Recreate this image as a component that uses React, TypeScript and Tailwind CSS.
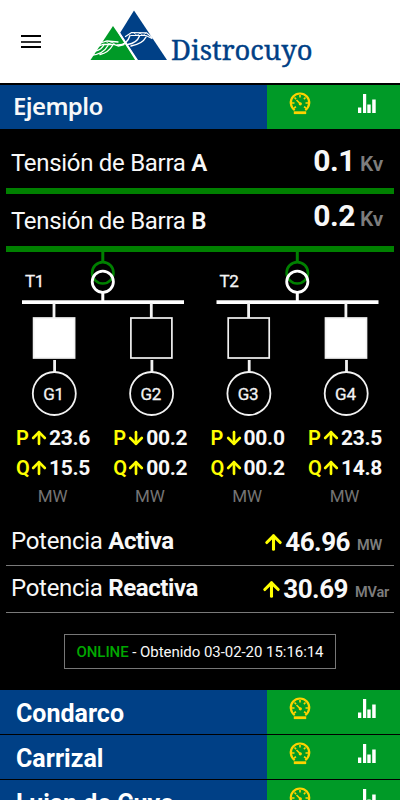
import { ArrowDown, ArrowUp } from 'lucide-react';

interface Generator {
  name: string;
  active: boolean;
  p: string;
  pDown?: boolean;
  q: string;
}

const generators: Generator[] = [
  { name: 'G1', active: true, p: '23.6', q: '15.5' },
  { name: 'G2', active: false, p: '00.2', pDown: true, q: '00.2' },
  { name: 'G3', active: false, p: '00.0', pDown: true, q: '00.2' },
  { name: 'G4', active: true, p: '23.5', q: '14.8' },
];

const otherStations = ['Condarco', 'Carrizal', 'Lujan de Cuyo'];

function Logo() {
  return (
    <svg width="228" height="64" viewBox="88 6 228 64">
      <path d="M113 26L90.500 60H136L119.500 35.500Z" fill="#009a27" />
      <path d="M134 10.500L120 33L138 60H167Z" fill="#004086" />
      <path d="M119 32.500L136.500 60.500" stroke="#fff" strokeWidth="1.700" />
      <g fill="none" stroke="#fff" strokeLinecap="round">
        <path d="M90 55.500C99 55 105 51 108 45.500M95.500 51C100 50 102.500 48 104 44.500M100 54.500C107 53 110 50 112.500 45.500" strokeWidth="1.300" />
        <path d="M102 42.500L107 41L118 42M99 46L103 44.500L114 44.500L118.500 46L124 44.500" strokeWidth="1.300" />
        <path d="M106 41.500L109 44L112 42L115 44.500" strokeWidth="0.800" />
        <path d="M117 45C124 45.500 128 42 130 35.500M127.500 44.500C135 43.500 138 40 139.500 36M131 46C139 44.500 144 41 146 37" strokeWidth="1.400" />
        <path d="M125.500 36.500L131.500 32.500L146.500 32.800L151.500 37M131 35.500L146 35.500L152 38.500" strokeWidth="1.200" />
        <path d="M134 33L137 35.500L140 33L143 35.500L146 33" strokeWidth="0.800" />
      </g>
      <text
        x="171"
        y="59.500"
        textLength="141.500"
        lengthAdjust="spacingAndGlyphs"
        fill="#004086"
        stroke="#004086"
        strokeWidth="0.400"
        className="font-['Noto_Serif','DejaVu_Serif',serif] text-[28px]"
      >
        Distrocuyo
      </text>
    </svg>
  );
}

function GaugeIcon() {
  return (
    <svg width="22" height="24" viewBox="0 0 22 24" fill="none" stroke="#ffd200">
      <path d="M5.700 18.200A9.200 9.200 0 1 1 16.300 18.200" strokeWidth="2.200" />
      <path d="M3 11h2.500M16.500 11H19M11 3v2.500M5.500 5.500l1.600 1.600M16.500 5.500l-1.600 1.600M5 16l2-1.200M17 16l-2-1.200" strokeWidth="1.600" />
      <path d="M7.500 8L11.500 12" strokeWidth="1.600" />
      <circle cx="11.300" cy="11.800" r="1.600" fill="#ffd200" stroke="none" />
      <path d="M4.800 20.700h12.400" strokeWidth="2.800" />
    </svg>
  );
}

function BarsIcon() {
  return (
    <svg width="18" height="19" viewBox="0 0 18 19" fill="#fff">
      <path d="M0 13.500h3.300v5.500H0zM5 0h3.200v19H5zM9.300 10.500h3.400V19H9.300zM14.200 5.500h3.500V19h-3.500z" />
    </svg>
  );
}

function StationActions() {
  return (
    <div className="flex w-[133px] shrink-0 bg-[#009a27]">
      <div className="flex w-[66px] justify-center pt-[7px]">
        <GaugeIcon />
      </div>
      <div className="flex w-[67px] justify-center pt-[9px]">
        <BarsIcon />
      </div>
    </div>
  );
}

function Schematic() {
  return (
    <svg width="400" height="166" viewBox="0 252 400 166" fill="none" className="block">
      {[0, 194.5].map((dx, i) => (
        <g key={dx} transform={`translate(${dx} 0)`}>
          <path d="M102.800 251v11" stroke="#008000" strokeWidth="3" />
          <circle cx="102.800" cy="272.800" r="10.700" stroke="#008000" strokeWidth="2.600" />
          <circle cx="102.800" cy="281.700" r="10.600" stroke="#fff" strokeWidth="2.800" />
          <path d="M102.800 293v8" stroke="#fff" strokeWidth="3" />
          <path d="M22 302.200h162" stroke="#fff" strokeWidth="3.800" />
          <text x="25" y="287" fill="#f5f5f5" stroke="#f5f5f5" strokeWidth="0.300" className="text-[17px] tracking-[-0.3px]">
            {`T${i + 1}`}
          </text>
        </g>
      ))}
      {generators.map((g, i) => (
        <g key={g.name} transform={`translate(${i * 97.3} 0)`} stroke="#f2f2f2">
          <path d="M54 303v15M54.600 360v12" strokeWidth="2.800" />
          <rect x="33.600" y="318" width="41" height="40" strokeWidth="1.700" fill={g.active ? '#fff' : 'none'} />
          <circle cx="54.300" cy="393.500" r="21.500" strokeWidth="1.800" />
          <text x="53.500" y="399.500" textAnchor="middle" fill="#f5f5f5" strokeWidth="0.300" className="text-[17px] tracking-[-0.2px]">
            {g.name}
          </text>
        </g>
      ))}
    </svg>
  );
}

function Reading({ label, value, down }: { label: string; value: string; down?: boolean }) {
  const Arrow = down ? ArrowDown : ArrowUp;
  return (
    <div className="flex h-[30px] items-center text-[21px] leading-[30px]">
      <span className="w-[13px] text-[20px] font-semibold text-[#ffff00]">{label}</span>
      <Arrow className="h-[20px] w-[20px] shrink-0 text-[#ffff00]" strokeWidth={3.200} />
      <span className="font-bold tracking-[-0.3px]">{value}</span>
    </div>
  );
}

function BusbarRow({ name, value, className }: { name: string; value: string; className: string }) {
  return (
    <div className={`flex justify-between border-b-[6px] border-[#008000] pl-[5px] pr-[11px] ${className}`}>
      <span className="text-[24px] leading-[28px] tracking-[-0.3px]">
        Tensión de Barra <b className="font-semibold">{name}</b>
      </span>
      <span className="-mt-[2px] text-[30px] font-bold leading-[28px] tracking-[-0.5px]">
        {value}
        <span className="ml-[5px] text-[21px] font-semibold tracking-[-0.2px] text-[#7d7d7d]">Kv</span>
      </span>
    </div>
  );
}

function TotalRow({ name, value, unit, className }: { name: string; value: string; unit: string; className: string }) {
  return (
    <div className={`flex border-b border-[#7a7a7a] pl-[5px] ${className}`}>
      <span className="flex-1 text-[24px] leading-[28px] tracking-[-0.3px]">
        Potencia <b className="font-bold tracking-[-0.4px]">{name}</b>
      </span>
      <ArrowUp className="mt-[4px] h-[23px] w-[23px] text-[#ffff00]" strokeWidth={3.200} />
      <span className="text-[26px] font-bold leading-[30px] tracking-[-0.5px]">{value}</span>
      <span className="ml-[7px] pt-[7px] text-[14.5px] font-semibold leading-[24px] tracking-[-0.2px] text-[#7d7d7d]">{unit}</span>
    </div>
  );
}

export default function App() {
  return (
    <div className="h-[800px] w-[400px] overflow-hidden bg-black font-[Roboto,sans-serif] text-[#f8f8f8]">
      <header className="flex h-[83px] bg-white pl-[21px] pt-[6px]">
        <div className="mr-[47px] mt-[29px] flex h-[13px] w-[20px] flex-col justify-between">
          <div className="h-[2px] bg-black" />
          <div className="h-[2px] bg-[#333]" />
          <div className="h-[2px] bg-black" />
        </div>
        <Logo />
      </header>

      <div className="mt-[2px] flex h-[44px] bg-[#004086]">
        <h1 className="flex-1 pl-[13px] font-['Noto_Sans',sans-serif] text-[24px] font-semibold leading-[42px] tracking-[-0.6px]">Ejemplo</h1>
        <StationActions />
      </div>

      <section className="mx-[6px]">
        <BusbarRow name="A" value="0.1" className="h-[65px] pt-[20px]" />
        <BusbarRow name="B" value="0.2" className="h-[58px] pt-[13px] [&>span:last-child]:-mt-[5px]" />
      </section>

      <Schematic />

      <section className="flex h-[96px] pl-[16px] pt-[5px]">
        {generators.map((g) => (
          <div key={g.name} className="w-[97.3px] shrink-0">
            <Reading label="P" value={g.p} down={g.pDown} />
            <Reading label="Q" value={g.q} />
            <div className="w-[73px] text-center text-[17px] leading-[27px] tracking-[-0.2px] text-[#747474]">MW</div>
          </div>
        ))}
      </section>

      <section className="mx-[6px]">
        <TotalRow name="Activa" value="46.96" unit="MW" className="h-[52px] pr-[12px] pt-[13px]" />
        <TotalRow name="Reactiva" value="30.69" unit="MVar" className="h-[47px] pr-[5px] pt-[8px]" />
      </section>

      <div className="mx-auto mt-[21px] h-[35px] w-[272px] border border-[#777] text-center text-[15px] leading-[34px] tracking-[-0.05px]">
        <span className="font-medium text-[#00a800]">ONLINE</span> - Obtenido 03-02-20 15:16:14
      </div>

      <nav className="mt-[21px]">
        {otherStations.map((name) => (
          <div key={name} className="mb-[1.2px] flex h-[44px] bg-[#004086]">
            <span className="flex-1 pl-[16px] text-[25px] font-bold leading-[47px] text-white">{name}</span>
            <StationActions />
          </div>
        ))}
      </nav>
    </div>
  );
}
